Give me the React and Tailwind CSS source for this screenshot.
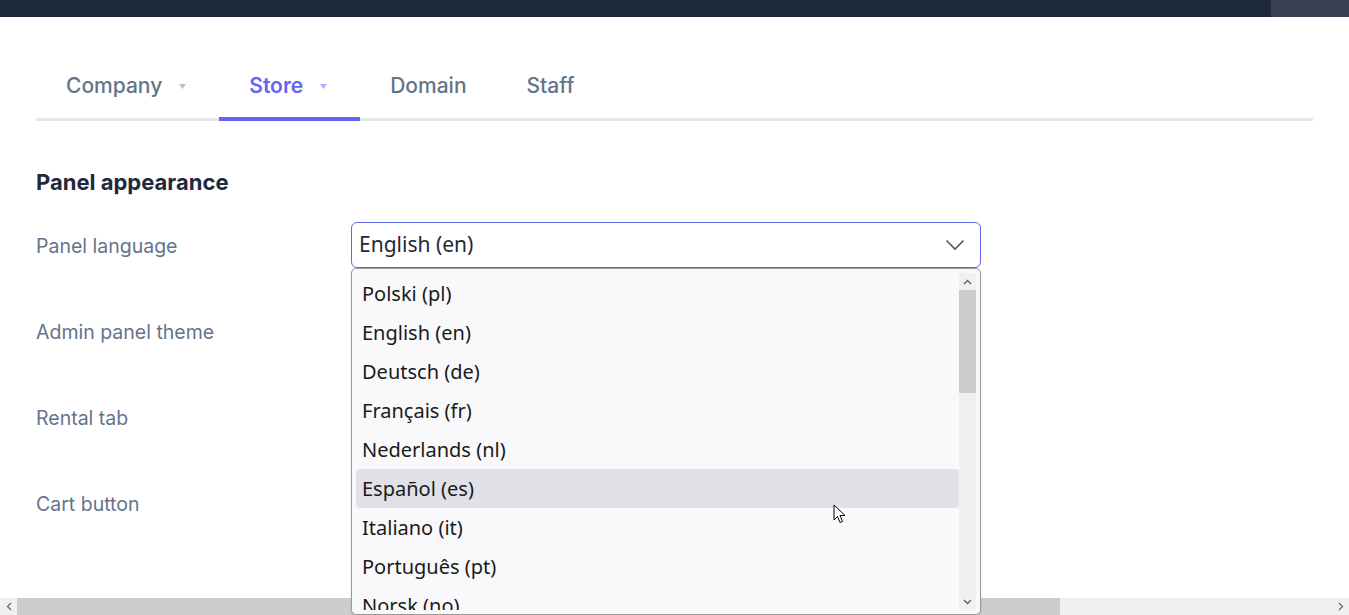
import React from "react";

const Caret = ({ color }) => (
  <svg width="10" height="5" viewBox="0 0 10 5" className="ml-[17px]">
    <path d="M0 0 L7 0 L3.5 5 Z" fill={color} />
  </svg>
);

const Tab = ({ label, active, caret }) => (
  <div
    className={`flex items-center px-[30px] pt-[22px] pb-[17px] -mb-[3px] border-b-4 ${
      active ? "border-[#6366f1] text-[#6366f1]" : "border-transparent text-[#64748b]"
    }`}
  >
    <span className={`text-[21px] leading-[28px] ${active ? "font-semibold" : "font-medium"}`}>{label}</span>
    {caret && <Caret color={active ? "#a5b4fc" : "#b8bec8"} />}
  </div>
);

const languages = [
  "Polski (pl)",
  "English (en)",
  "Deutsch (de)",
  "Français (fr)",
  "Nederlands (nl)",
  "Español (es)",
  "Italiano (it)",
  "Português (pt)",
  "Norsk (no)",
];

const Row = ({ label, children }) => (
  <div className="flex items-center h-[46px]">
    <div className="w-[315px] pt-[3px] text-[19.5px] text-[#64748b]">{label}</div>
    {children}
  </div>
);

export default function App() {
  return (
    <div
      className="relative w-[1349px] h-[615px] overflow-hidden bg-white flex flex-col"
      style={{ fontFamily: "Inter, 'Noto Sans', sans-serif" }}
    >
      {/* top bar */}
      <div className="h-[17px] flex shrink-0">
        <div className="flex-1 bg-[#1e293b]" />
        <div className="w-[78px] bg-[#374151]" />
      </div>

      {/* content */}
      <div className="flex-1 px-9">
        <div className="mt-[33px] flex border-b-[3px] border-[#e5e7eb]">
          <Tab label="Company" caret />
          <Tab label="Store" caret active />
          <Tab label="Domain" />
          <Tab label="Staff" />
        </div>

        <h2 className="mt-[47px] text-[22px] leading-[28px] font-bold text-[#1e293b]">
          Panel appearance
        </h2>

        <div className="mt-[26px] flex flex-col gap-[40px]">
          <Row label="Panel language">
            <div className="w-[630px] h-[46px] border border-[#6366f1] rounded-[6px] flex items-center justify-between pl-[7px] pr-[15px]">
              <span
                className="text-[21px] text-[#1f2937]"
                style={{ fontFamily: "'Noto Sans', sans-serif" }}
              >
                English (en)
              </span>
              <svg width="20" height="12" viewBox="0 0 20 12">
                <path d="M1.5 1.5 L10 10 L18.5 1.5" fill="none" stroke="#555" strokeWidth="1.6" />
              </svg>
            </div>
          </Row>
          <Row label="Admin panel theme" />
          <Row label="Rental tab" />
          <Row label="Cart button" />
        </div>
      </div>

      {/* horizontal scrollbar */}
      <div className="h-[17px] shrink-0 flex bg-[#f0f0f0]">
        <div className="w-[17px] flex items-center justify-center">
          <svg width="6" height="9" viewBox="0 0 6 9">
            <path d="M5 1 L1.5 4.5 L5 8" fill="none" stroke="#606060" strokeWidth="1.2" />
          </svg>
        </div>
        <div className="w-[1043px] bg-[#cdcdcd]" />
        <div className="flex-1" />
        <div className="w-[17px] flex items-center justify-center">
          <svg width="6" height="9" viewBox="0 0 6 9">
            <path d="M1 1 L4.5 4.5 L1 8" fill="none" stroke="#606060" strokeWidth="1.2" />
          </svg>
        </div>
      </div>

      {/* dropdown list overlay */}
      <div
        className="absolute left-[351px] top-[268px] w-[630px] h-[347px] bg-[#f9f9fb] border border-[#9a9a9a] rounded-[5px] flex pl-[4px] pr-[4px] pt-[4px] pb-[4px] shadow-sm"
        style={{ fontFamily: "'Noto Sans', sans-serif" }}
      >
        <div className="flex-1 flex flex-col pt-[1px] overflow-hidden">
          {languages.map((l) => (
            <div
              key={l}
              className={`h-[39px] shrink-0 flex items-center pl-[6px] text-[20px] text-[#1a1a1a] rounded-[4px] ${
                l === "Español (es)" ? "bg-[#e1e1e7]" : ""
              }`}
            >
              {l}
            </div>
          ))}
        </div>
        <div className="w-[17px] bg-[#f0f0f0] flex flex-col">
          <div className="h-[17px] flex items-center justify-center">
            <svg width="9" height="6" viewBox="0 0 9 6">
              <path d="M1 5 L4.5 1.5 L8 5" fill="none" stroke="#606060" strokeWidth="1.4" />
            </svg>
          </div>
          <div className="h-[103px] bg-[#cdcdcd]" />
          <div className="flex-1" />
          <div className="h-[17px] flex items-center justify-center">
            <svg width="9" height="6" viewBox="0 0 9 6">
              <path d="M1 1 L4.5 4.5 L8 1" fill="none" stroke="#606060" strokeWidth="1.4" />
            </svg>
          </div>
        </div>
      </div>

      {/* mouse cursor */}
      <svg
        className="absolute left-[833px] top-[504px]"
        width="14"
        height="21"
        viewBox="0 0 14 21"
      >
        <path
          d="M1 1 L1 16 L4.5 12.5 L7 18.5 L9.5 17.5 L7 11.5 L12 11.5 Z"
          fill="#fff"
          stroke="#000"
          strokeWidth="1"
          strokeLinejoin="round"
        />
      </svg>
    </div>
  );
}
